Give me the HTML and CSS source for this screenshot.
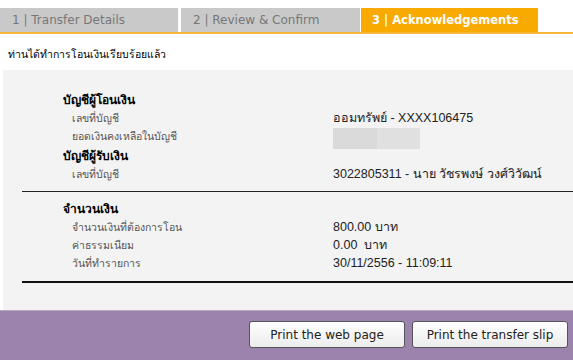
FILE: index.html
```html
<!DOCTYPE html>
<html>
  <head>
    <title>Acknowledgements</title>
    <link rel="stylesheet" href="styles.css">
  </head>
  <body>
    <div class="tabs">
      <div class="tab tab-one">1 | Transfer Details</div>
      <div class="tab tab-two">2 | Review &amp; Confirm</div>
      <div class="tab tab-active">3 | Acknowledgements</div>
    </div>

    <p class="message">ท่านได้ทำการโอนเงินเรียบร้อยแล้ว</p>

    <div class="panel">
      <div class="section section-first">
        <div class="heading">บัญชีผู้โอนเงิน</div>
        <div class="row"><span class="label">เลขที่บัญชี</span><span class="value">ออมทรัพย์ - XXXX106475</span></div>
        <div class="row row-hidden"><span class="label">ยอดเงินคงเหลือในบัญชี</span><span class="value"><i class="blur"></i><i class="blur blur-light"></i></span></div>
        <div class="heading">บัญชีผู้รับเงิน</div>
        <div class="row"><span class="label">เลขที่บัญชี</span><span class="value">3022805311 - นาย วัชรพงษ์ วงศ์วิวัฒน์</span></div>
      </div>
      <hr class="rule">
      <div class="section">
        <div class="heading">จำนวนเงิน</div>
        <div class="row"><span class="label">จำนวนเงินที่ต้องการโอน</span><span class="value">800.00 บาท</span></div>
        <div class="row"><span class="label">ค่าธรรมเนียม</span><span class="value">0.00&nbsp; บาท</span></div>
        <div class="row"><span class="label">วันที่ทำรายการ</span><span class="value">30/11/2556 - 11:09:11</span></div>
      </div>
      <hr class="rule rule-thick">
    </div>

    <div class="footer">
      <button>Print the web page</button>
      <button>Print the transfer slip</button>
    </div>
  </body>
</html>
```

FILE: styles.css
```css
body{
  margin: 0;
  font-family: "Liberation Sans", Arial, sans-serif;
  font-size: 12px;
  color: #222;
  background: #fff;
}

.tabs{
  display: flex;
  margin-top: 8px;
  border-bottom: 2px solid #f6b63a;
}

.tab{
  height: 24px;
  line-height: 24px;
  padding-left: 12px;
  box-sizing: border-box;
  font-family: "DejaVu Sans", Tahoma, sans-serif;
  font-size: 12px;
  color: #777;
  background: #c9c9c9;
}

.tab-one{
  width: 178px;
  margin-right: 3px;
}

.tab-two{
  width: 179px;
  margin-right: 1px;
}

.tab-active{
  width: 177px;
  padding-left: 11px;
  background: #f8aa00;
  color: #fff;
  font-weight: bold;
  font-size: 11.5px;
}

.message{
  margin: 0;
  height: 36px;
  line-height: 40px;
  padding-left: 8px;
  font-size: 10.5px;
  color: #000;
}

.panel{
  margin-left: 3px;
  height: 240px;
  background: #f3f3f3;
  padding-top: 21px;
  box-sizing: border-box;
}

.section{
  padding-left: 69px;
}

.heading{
  height: 18px;
  line-height: 18px;
  margin-left: -9px;
  font-weight: bold;
  font-size: 12px;
  color: #000;
}

.row{
  display: grid;
  grid-template-columns: 261px 1fr;
  height: 18px;
  line-height: 18px;
}

.row-hidden{
  height: 20px;
}

.label{
  color: #555;
  font-size: 10.5px;
}

.value{
  color: #222;
  font-size: 12.5px;
  display: flex;
}

.blur{
  display: inline-block;
  width: 44px;
  height: 21px;
  margin-top: 1px;
  background: #dadada;
}

.blur-light{
  width: 43px;
  background: #e0e0e0;
}

.rule{
  margin: 8px 0 8px 19px;
  border: 0;
  border-top: 1px solid #222;
}

.rule-thick{
  margin-top: 9px;
  border-top: 2px solid #111;
}

.footer{
  height: 50px;
  background: #9b83ae;
  border-top: 1px solid #b7a6c6;
  box-sizing: border-box;
  display: flex;
  justify-content: flex-end;
  align-items: flex-start;
  padding-top: 10px;
  padding-right: 5px;
  gap: 7px;
}

.footer button{
  height: 27px;
  width: 156px;
  font-family: "DejaVu Sans", Tahoma, sans-serif;
  font-size: 12px;
  color: #222;
  background: linear-gradient(#ffffff, #ececec);
  border: 1px solid #555;
  border-radius: 3px;
}
```
